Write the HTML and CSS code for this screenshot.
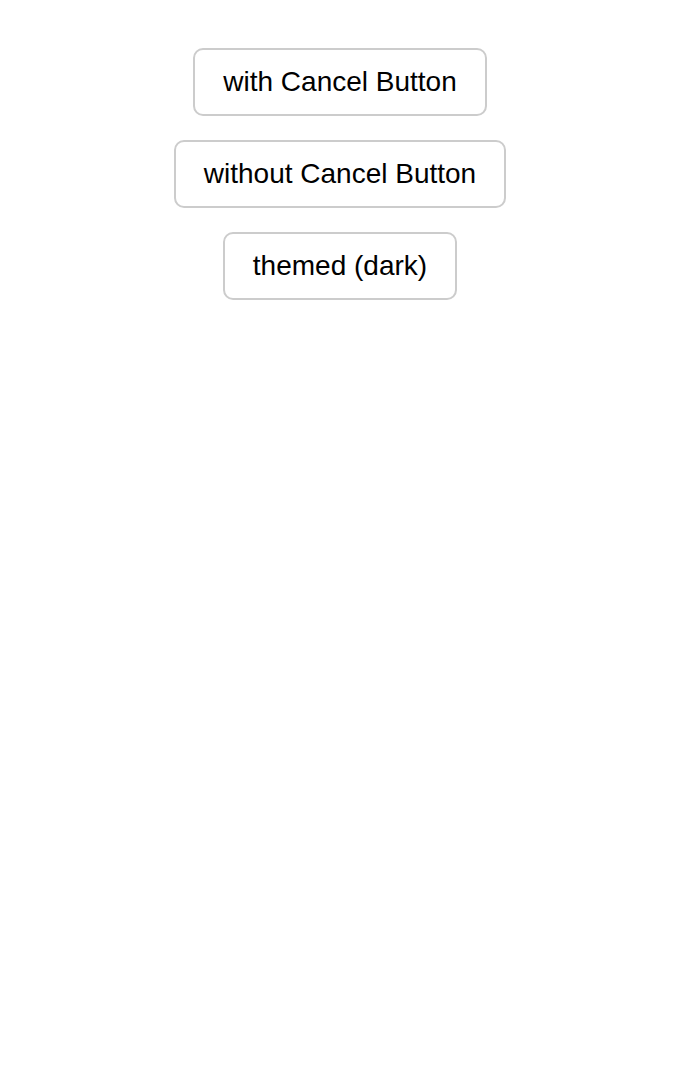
FILE: index.html
```html
<!DOCTYPE html>
<html lang="en">
<head>
    <meta charset="UTF-8">
    <meta name="viewport" content="width=device-width, initial-scale=1.0">
    <title>Action Sheet Demo</title>
    <link rel="stylesheet" href="styles.css">
</head>
<body>
    <div class="demo-list">
        <button class="demo-btn">with Cancel Button</button>
        <button class="demo-btn">without Cancel Button</button>
        <button class="demo-btn">themed (dark)</button>
    </div>
</body>
</html>
```

FILE: styles.css
```css
body {
    margin: 0;
    font-family: "Liberation Sans", Arial, sans-serif;
    background-color: #fff;
    color: #000;
}
.demo-list {
    display: flex;
    flex-direction: column;
    align-items: center;
    gap: 24px;
    padding-top: 48px;
}
.demo-btn {
    font-family: inherit;
    font-size: 28px;
    line-height: 32px;
    color: #000;
    background-color: #fff;
    border: 2px solid #ccc;
    border-radius: 10px;
    padding: 16px 28px;
    cursor: pointer;
}
```
